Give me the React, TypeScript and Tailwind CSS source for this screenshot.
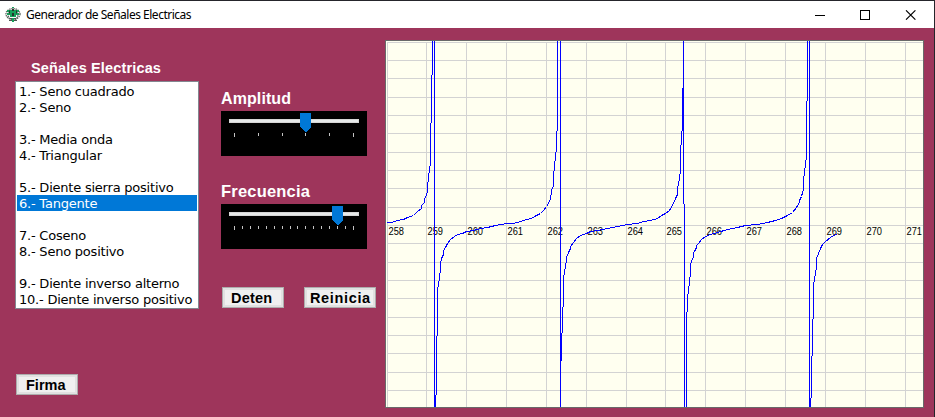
const SIGNALS = [
  '1.- Seno cuadrado',
  '2.- Seno',
  '',
  '3.- Media onda',
  '4.- Triangular',
  '',
  '5.- Diente sierra positivo',
  '6.- Tangente',
  '',
  '7.- Coseno',
  '8.- Seno positivo',
  '',
  '9.- Diente inverso alterno',
  '10.- Diente inverso positivo',
];
const SELECTED = 7;

function Emblem() {
  return (
    <svg width="16" height="16" viewBox="0 0 16 16">
      <g fill="none" stroke="#5c645f" strokeWidth="1.4" strokeDasharray="1.3 0.8">
        <ellipse cx="8" cy="7" rx="7" ry="5.4" />
        <ellipse cx="8" cy="8.4" rx="4.8" ry="4.6" />
      </g>
      <path d="M2 3h12v2h-2v1h2v2h-3v2H5V8H2V6h2V5H2z" fill="#17a05a" />
      <path d="M4 3.5h1v3H4zM7 2h2v2H7zM11 3.5h1v3h-1zM7 6h2v3H7z" fill="#26342c" />
      <path d="M5 11h2v1H5zM9 11h2v1H9zM4 13h3v1H4zM9 13h3v1H9z" fill="#4d5550" />
      <path d="M7 11h2v4H7zM7 0h2v1H7z" fill="#17a05a" />
    </svg>
  );
}

function TitleBar() {
  return (
    <header className="flex h-7 items-center border-t border-[#25252b] bg-white pl-[5px] pr-[18px]">
      <Emblem />
      <h1 className="ml-[5px] whitespace-nowrap font-['Noto_Sans',sans-serif] text-[12px] leading-[26px] tracking-[-0.49px] text-black">
        Generador de Señales Electricas
      </h1>
      <svg className="ml-auto" width="101" height="10" viewBox="0 0 101 10" fill="none" stroke="#000">
        <path d="M0 5.5h10" shapeRendering="crispEdges" />
        <rect x="45.5" y="0.5" width="9" height="9" shapeRendering="crispEdges" />
        <path d="M91 0.3l9.4 9.4M100.4 0.3L91 9.7" strokeWidth="1.1" />
      </svg>
    </header>
  );
}

function Slider({ ticks, thumb }: { ticks: number; thumb: number }) {
  const marks = Array.from({ length: ticks }, (_, i) => Math.round(13 + (i * 119) / (ticks - 1)));
  return (
    <svg className="block bg-black" width="146" height="45" shapeRendering="crispEdges">
      <rect x="8" y="8" width="130" height="4" fill="#d6d6d6" />
      <rect x="9" y="9" width="128" height="2" fill="#e7eaea" />
      {marks.map((x, i) => (
        <rect key={x} x={x} y="22" width="1" height={i === 0 || i === ticks - 1 ? 4 : 3} fill="#c4c4c4" />
      ))}
      <path d={`M${thumb} 2h11v14l-5 5h-1l-5-5z`} fill="#0078d7" />
    </svg>
  );
}

function Button({ label, className }: { label: string; className: string }) {
  return (
    <button
      className={`flex h-[21px] items-center whitespace-nowrap border border-[#adadad] bg-[#f0f0f0] pt-px font-bold leading-[17px] text-black shadow-[inset_0_0_0_2px_#e1e1e1] ${className}`}
    >
      {label}
    </button>
  );
}

const COLUMNS = [387, 426, 466, 506, 546, 586, 626, 665, 705, 745, 785, 825, 865, 905];
const ROWS = [42, 60, 78, 97, 115, 133, 152, 170, 188, 207, 225, 243, 262, 280, 298, 317, 335, 353, 372, 390];

const BRANCHES = [
  '387,222 391,222 397,220 403,219 407,217 413,215 417,211 421,208 421,205 424,202 424,198 426,195 427,191 427,182 428,181 428,173 429,172 429,166 430,165 430,123 431,122 431,75 432,74 432,41',
  '434,41 434,406',
  '435,406 435,395 436,394 436,336 437,335 437,287 438,286 438,281 439,280 439,273 440,272 440,261 441,260 441,258 443,254 443,250 445,247 447,243 450,239 454,236 457,234 462,233 466,231 473,230 480,228 487,227 495,225 506,223 513,223 520,221 526,219 531,218 536,215 540,213 543,210 546,206 548,203 550,198 550,195 551,194 551,189 553,186 553,171 554,170 554,161 555,160 555,152 556,151 556,131 557,130 557,41',
  '560,41 560,406',
  '561,360 561,333 562,332 562,307 563,306 563,275 564,274 564,269 565,268 565,263 566,262 566,257 568,252 570,248 570,246 573,242 576,238 580,235 586,233 590,231 597,230 607,228 617,226 627,224 637,223 643,221 650,220 657,218 661,215 665,213 669,210 672,205 675,198 677,194 677,186 678,185 678,181 679,180 679,174 680,173 680,145 681,144 681,131 682,130 682,88',
  '683,41 683,203 684,204 684,406',
  '686,406 686,312 687,311 687,294 688,293 688,286 689,285 689,277 690,276 690,263 691,262 691,261 693,256 693,252 694,251 696,247 696,245 698,243 701,239 705,236 710,234 717,232 727,229 737,227 745,225 757,224 767,222 775,220 781,218 787,215 792,212 796,207 799,202 799,200 801,196 802,192 803,189 803,176 804,175 804,168 805,167 805,160 806,159 806,101 807,100 807,41',
  '809,41 809,406',
  '810,406 810,398 811,397 811,356 812,355 812,319 813,318 813,282 814,281 814,276 815,275 815,270 816,269 816,258 818,253 820,248 822,244 825,241 830,237 833,235 836,234',
];

function Scope() {
  return (
    <svg className="block" width="539" height="368" viewBox="385 40 539 368">
      <rect x="385" y="40" width="539" height="368" fill="#696969" />
      <rect x="386" y="41" width="537" height="366" fill="#fffff0" />
      <g fill="#d3d3d3" shapeRendering="crispEdges">
        {COLUMNS.map((x) => (
          <rect key={x} x={x} y="42" width="1" height="365" />
        ))}
        {ROWS.map((y) => (
          <rect key={y} x="387" y={y} width="536" height="1" />
        ))}
      </g>
      <g fill="#000" fontFamily="'Liberation Sans', Arial, sans-serif" fontSize="10">
        {COLUMNS.map((x, i) => (
          <text key={x} x={x + 1.5} y="235" textLength="15.5" lengthAdjust="spacingAndGlyphs">
            {258 + i}
          </text>
        ))}
      </g>
      <g fill="none" stroke="#0000ff" strokeLinecap="square" shapeRendering="crispEdges" transform="translate(0.5 0.5)">
        {BRANCHES.map((points) => (
          <polyline key={points} points={points} />
        ))}
      </g>
    </svg>
  );
}

export default function App() {
  return (
    <div className="h-[417px] w-[935px] overflow-hidden border-r border-[#25252b] bg-[#9e355b] font-['Liberation_Sans',Arial,sans-serif]">
      <TitleBar />
      <main className="flex h-[389px] items-start pl-[15px]">
        <section className="w-[184px] pt-[31px]">
          <h2 className="h-[22px] whitespace-nowrap pl-4 text-[14.5px] font-bold leading-[19px] tracking-[0.15px] text-white">
            Señales Electricas
          </h2>
          <ul className="h-[228px] border border-[#828790] bg-white p-px font-['DejaVu_Sans',Verdana,sans-serif] text-[13px] leading-[18px] tracking-[-0.22px]">
            {SIGNALS.map((name, i) => (
              <li
                key={i}
                className={`h-4 whitespace-nowrap pl-[2px] ${i === SELECTED ? 'bg-[#0078d7] text-white' : 'text-black'}`}
              >
                {name}
              </li>
            ))}
          </ul>
          <Button label="Firma" className="ml-px mt-[65px] w-[62px] pl-[9px] text-[14.5px]" />
        </section>

        <section className="ml-[22px] w-[164px] pt-[60px] text-white">
          <h2 className="h-[23px] text-base font-bold leading-[22px] tracking-[0.1px]">Amplitud</h2>
          <Slider ticks={6} thumb={79} />
          <h2 className="mt-[25px] h-[23px] text-[16.5px] font-bold leading-[20px] tracking-[0.2px]">Frecuencia</h2>
          <Slider ticks={16} thumb={111} />
          <div className="ml-px mt-[38px] flex gap-5">
            <Button label="Deten" className="w-[62px] pl-2 text-[14.5px] tracking-[0.2px]" />
            <Button label="Reinicia" className="w-[72px] pl-[5px] text-[14.5px] tracking-[0.65px]" />
          </div>
        </section>

        <section className="pt-3">
          <Scope />
        </section>
      </main>
    </div>
  );
}
